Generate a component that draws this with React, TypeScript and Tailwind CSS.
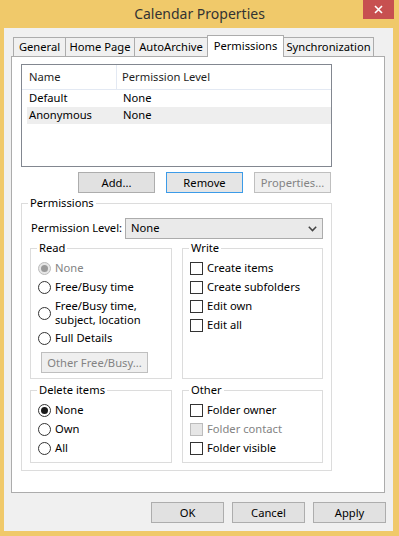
import React from "react";

type BtnProps = {
  label: string;
  width: string;
  focus?: boolean;
  disabled?: boolean;
};

function Btn({ label, width, focus, disabled }: BtnProps) {
  let cls = "border-[#adadad] bg-[#e1e1e1] text-[#000]";
  if (focus) cls = "border-[#3c9be8] bg-[#e5e5e5] text-[#000]";
  if (disabled) cls = "border-[#bfbfbf] bg-[#efefef] text-[#838383]";
  return (
    <div className={`${width} h-[21px] shrink-0 border flex items-center justify-center leading-none ${cls}`}>
      {label}
    </div>
  );
}

function Radio({ checked, disabled }: { checked?: boolean; disabled?: boolean }) {
  return (
    <span
      className={`w-[13px] h-[13px] shrink-0 rounded-full border flex items-center justify-center ${
        disabled ? "border-[#bcbcbc] bg-[#e6e6e6]" : "border-[#333333] bg-white"
      }`}
    >
      {checked && (
        <span className={`w-[7px] h-[7px] rounded-full ${disabled ? "bg-[#9a9a9a]" : "bg-[#1a1a1a]"}`} />
      )}
    </span>
  );
}

function Check({ disabled }: { disabled?: boolean }) {
  return (
    <span
      className={`w-[13px] h-[13px] shrink-0 border ${
        disabled ? "border-[#bcbcbc] bg-[#e6e6e6]" : "border-[#333333] bg-white"
      }`}
    />
  );
}

function Group({ label, className, children }: { label: string; className: string; children?: React.ReactNode }) {
  return (
    <div className={`relative shrink-0 border border-[#dcdcdc] ${className}`}>
      <span className="absolute top-[-8px] left-[6px] bg-white px-[2px] leading-[14px]">{label}</span>
      {children}
    </div>
  );
}

function RadioRow({ label, checked, disabled }: { label: string; checked?: boolean; disabled?: boolean }) {
  return (
    <div className="h-[19px] shrink-0 flex items-center gap-[4px] whitespace-nowrap">
      <Radio checked={checked} disabled={disabled} />
      <span className={disabled ? "text-[#838383]" : ""}>{label}</span>
    </div>
  );
}

function CheckRow({ label, disabled }: { label: string; disabled?: boolean }) {
  return (
    <div className="h-[19px] shrink-0 flex items-center gap-[4px] whitespace-nowrap">
      <Check disabled={disabled} />
      <span className={disabled ? "text-[#838383]" : ""}>{label}</span>
    </div>
  );
}

const tabs = [
  { label: "General", w: "w-[53px]" },
  { label: "Home Page", w: "w-[70px]" },
  { label: "AutoArchive", w: "w-[74px]" },
  { label: "Permissions", w: "w-[77px]", active: true },
  { label: "Synchronization", w: "w-[91px]" },
];

export default function App() {
  return (
    <div className="w-[399px] h-[536px] bg-[#f0c96a] flex flex-col text-[11.2px] text-black font-['Noto_Sans',sans-serif] overflow-hidden">
      {/* title bar */}
      <div className="relative h-[28px] shrink-0 flex items-center justify-center">
        <span className="text-[14px] text-[#333333] -mt-[2px]">Calendar Properties</span>
        <div className="absolute top-0 right-[5px] w-[31px] h-[19px] bg-[#c75050] flex items-center justify-center">
          <svg width="9" height="9" viewBox="0 0 9 9">
            <path d="M1 1 L8 8 M8 1 L1 8" stroke="white" strokeWidth="1.6" />
          </svg>
        </div>
      </div>

      {/* client area */}
      <div className="ml-[4px] w-[389px] h-[503px] bg-[#f0f0f0] flex flex-col">
        {/* tabs */}
        <div className="mt-[7px] ml-[9px] h-[21px] flex items-end">
          {tabs.map((t, i) =>
            t.active ? (
              <div
                key={t.label}
                className={`${t.w} -ml-px h-[22px] mb-[-1px] relative z-10 bg-white border-t border-l border-r border-[#acacac] flex justify-center pt-[2px]`}
              >
                {t.label}
              </div>
            ) : (
              <div
                key={t.label}
                className={`${t.w} ${i === 0 ? "" : "-ml-px"} h-[19px] bg-[#f0f0f0] border-t border-l border-r border-[#acacac] flex items-center justify-center`}
              >
                {t.label}
              </div>
            )
          )}
        </div>

        {/* panel */}
        <div className="ml-[7px] w-[374px] h-[437px] bg-white border border-[#acacac] flex flex-col">
          {/* list */}
          <div className="ml-[9px] mt-[7px] w-[311px] h-[103px] border border-[#828790] flex flex-col">
            <div className="h-[25px] flex border-b border-[#e3e9f3]">
              <div className="w-[95px] pl-[7px] flex items-center border-r border-[#e3e9f3] text-[#1e1e1e]">Name</div>
              <div className="pl-[5px] flex items-center text-[#1e1e1e]">Permission Level</div>
            </div>
            <div className="h-[17px] flex items-center">
              <span className="w-[95px] pl-[7px]">Default</span>
              <span className="pl-[6px]">None</span>
            </div>
            <div className="h-[17px] ml-[5px] flex items-center bg-[#eeeeee]">
              <span className="w-[90px] pl-[2px]">Anonymous</span>
              <span className="pl-[6px]">None</span>
            </div>
          </div>

          {/* add / remove / properties */}
          <div className="mt-[5px] ml-[66px] flex gap-[11px]">
            <Btn label="Add..." width="w-[77px]" />
            <Btn label="Remove" width="w-[77px]" focus />
            <Btn label="Properties..." width="w-[77px]" disabled />
          </div>

          {/* permissions group */}
          <Group label="Permissions" className="ml-[9px] mt-[10px] w-[311px] h-[268px] flex flex-col">
            <div className="mt-[14px] ml-[9px] mr-[8px] flex items-center justify-between whitespace-nowrap">
              <span>Permission Level:</span>
              <div className="w-[198px] h-[21px] border border-[#acacac] bg-[#eaeaea] flex items-center justify-between pl-[5px] pr-[5px]">
                <span>None</span>
                <svg width="9" height="6" viewBox="0 0 9 6">
                  <path d="M0.8 0.8 L4.5 4.6 L8.2 0.8" stroke="#444" strokeWidth="1.5" fill="none" />
                </svg>
              </div>
            </div>

            <div className="mt-[9px] ml-[8px] flex gap-[10px]">
              <Group label="Read" className="w-[142px] h-[131px] pt-[10px] pl-[7px] flex flex-col">
                <RadioRow label="None" checked disabled />
                <RadioRow label="Free/Busy time" />
                <div className="h-[32px] shrink-0 flex items-center gap-[4px]">
                  <Radio />
                  <span className="leading-[14px] whitespace-nowrap">
                    Free/Busy time,
                    <br />
                    subject, location
                  </span>
                </div>
                <RadioRow label="Full Details" />
                <div className="mt-[4px] ml-[3px]">
                  <Btn label="Other Free/Busy..." width="w-[107px]" disabled />
                </div>
              </Group>
              <Group label="Write" className="w-[141px] h-[131px] pt-[10px] pl-[7px] flex flex-col">
                <CheckRow label="Create items" />
                <CheckRow label="Create subfolders" />
                <CheckRow label="Edit own" />
                <CheckRow label="Edit all" />
              </Group>
            </div>

            <div className="mt-[11px] ml-[8px] flex gap-[10px]">
              <Group label="Delete items" className="w-[142px] h-[73px] pt-[10px] pl-[7px] flex flex-col">
                <RadioRow label="None" checked />
                <RadioRow label="Own" />
                <RadioRow label="All" />
              </Group>
              <Group label="Other" className="w-[141px] h-[73px] pt-[10px] pl-[7px] flex flex-col">
                <CheckRow label="Folder owner" />
                <CheckRow label="Folder contact" disabled />
                <CheckRow label="Folder visible" />
              </Group>
            </div>
          </Group>
        </div>

        {/* dialog buttons */}
        <div className="mt-[9px] pr-[7px] flex justify-end gap-[8px]">
          <Btn label="OK" width="w-[73px]" />
          <Btn label="Cancel" width="w-[73px]" />
          <Btn label="Apply" width="w-[73px]" />
        </div>
      </div>
    </div>
  );
}
